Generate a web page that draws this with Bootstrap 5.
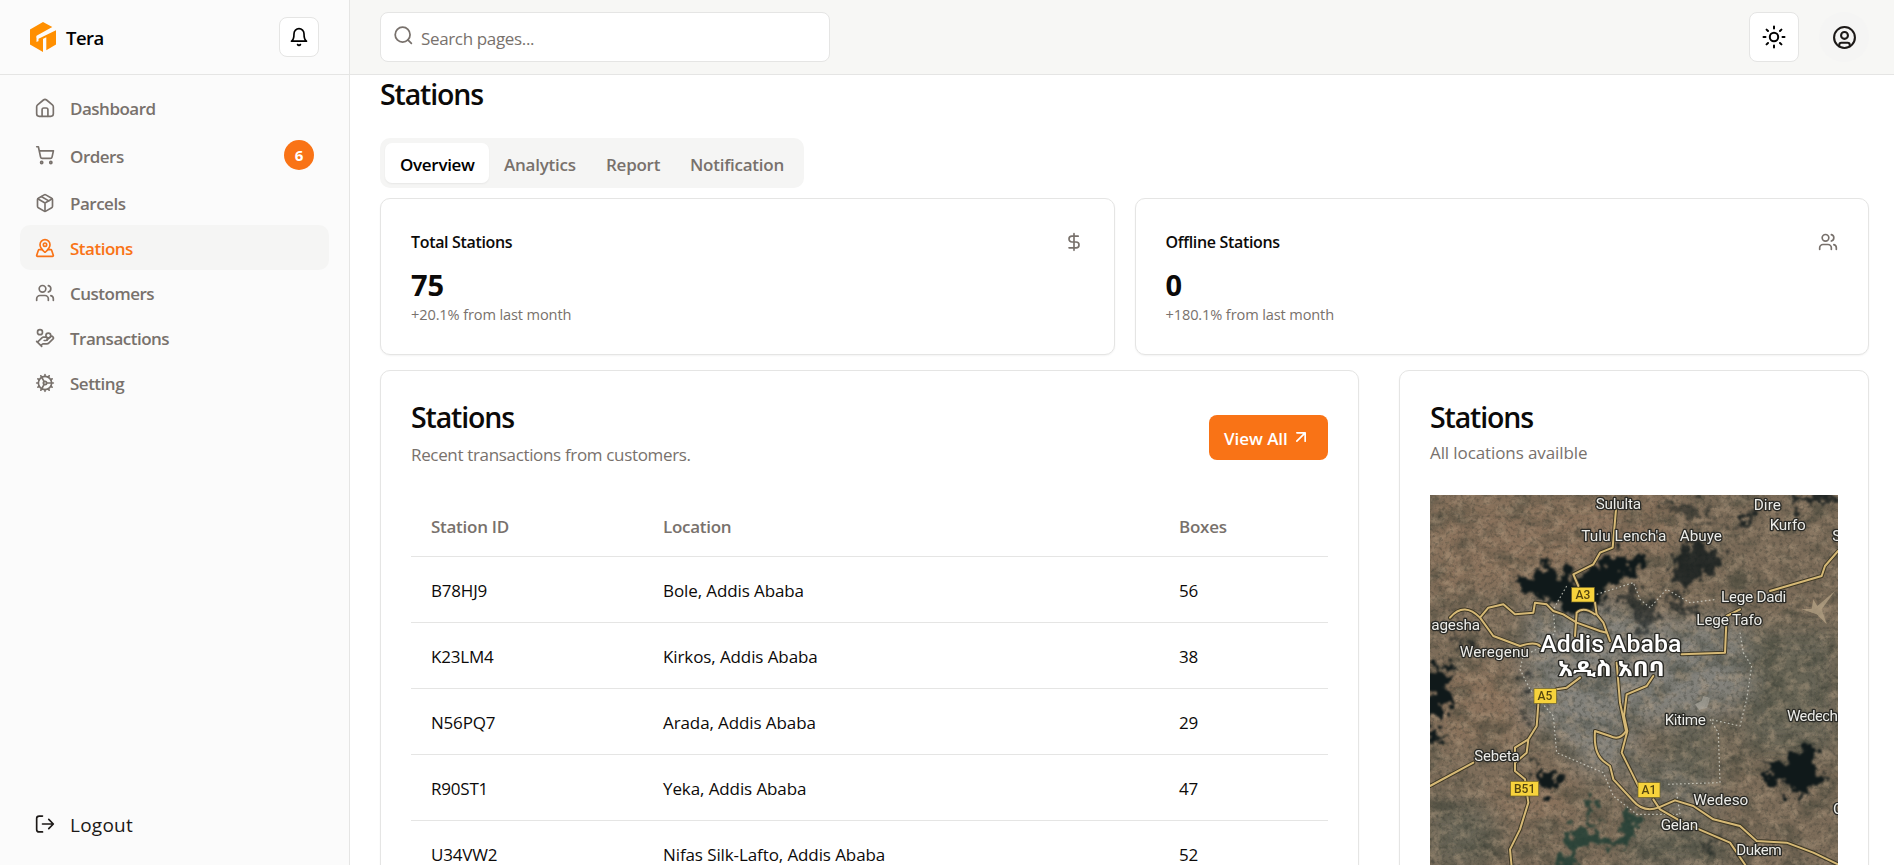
<!DOCTYPE html>
<html lang="en">
<head>
<meta charset="utf-8">
<meta name="viewport" content="width=device-width, initial-scale=1">
<title>Tera - Stations</title>
<link href="https://cdn.jsdelivr.net/npm/bootstrap@5.3.0/dist/css/bootstrap.min.css" rel="stylesheet">
<style>
:root{--line:#e5e5e4;--muted:#78716c;--ink:#0c0a09;--brand:#f97316;--soft:#f5f5f4}
body{font-family:"Open Sans","Noto Sans",sans-serif;font-size:17px;line-height:25px;color:var(--ink);height:865px;overflow:hidden;background:#fff}
svg.ic{width:20px;height:20px;fill:none;stroke:currentColor;stroke-width:2;stroke-linecap:round;stroke-linejoin:round;flex:none}
.muted{color:var(--muted)}
.side{width:350px;flex:none;background:#fbfbfb;border-right:1px solid var(--line)}
.bar{height:75px;border-bottom:1px solid var(--line);flex:none}
.side .bar{padding:0 30px}
.brandname{font-size:18.5px;font-weight:600;letter-spacing:-.5px;color:#000;margin-left:10px}
.sqbtn{background:#fff;border:1px solid var(--line);border-radius:8px;padding:0;display:flex;align-items:center;justify-content:center;color:#000}
.sqbtn.small-sq{width:40px;height:40px}
.sqbtn.big-sq{width:50px;height:50px}
.menu{padding:10px 20px 0}
.menu .nav-link{height:45px;padding:2px 15px 0;gap:15px;border-radius:10px;color:var(--muted);font-weight:600;letter-spacing:-.5px;display:flex;align-items:center}
.menu .nav-link .ic,.menu .nav-link .count{margin-bottom:2px}
.menu .nav-link.tall{height:50px}
.menu .nav-link.active{background:var(--soft);color:var(--brand)}
.count{width:30px;height:30px;background:var(--brand);color:#fff;font-size:15px;font-weight:700;letter-spacing:0}
.logout{height:50px;padding:2px 35px 0;gap:15px;margin-bottom:16px;font-size:19px;letter-spacing:.25px;color:#1c1917}
.logout .ic{margin-bottom:2px}
.main .bar{background:#f7f7f5;padding:0 25px 0 30px}
.search{width:450px;height:50px;background:#fff;border:1px solid var(--line);border-radius:8px;padding:0 12px;gap:7px;color:var(--muted);letter-spacing:-.35px}
.search .ic{width:21px;height:21px;margin-bottom:3px}
.avatar{width:50px;height:50px;background:#f5f5f4;color:#1c1917;border:0;margin-left:20px}
.content{padding:0 25px 0 30px}
.title{font-size:28.5px;font-weight:600;letter-spacing:-1.15px;line-height:38px;margin:0}
.tabs{background:var(--soft);border-radius:10px;padding:5px;height:50px;width:424px;margin-top:25px}
.tabs .nav-link{height:40px;padding:1px 0 0 15px;border-radius:7px;color:var(--muted);font-weight:600;letter-spacing:-.25px;line-height:41px;white-space:nowrap}
.tabs .nav-link.active{background:#fff;color:#000;box-shadow:0 1px 2px rgba(0,0,0,.06);letter-spacing:-.3px}
.panel{border:1px solid var(--line);border-radius:10px;background:#fff;box-shadow:0 1px 2px rgba(0,0,0,.05)}
.stats{gap:20px;margin-top:10px}
.stat{height:157px;padding:30px 30px 0;flex:1}
.stat .lbl{font-size:16px;font-weight:600;letter-spacing:-.33px;padding-top:1px}
.stat .num{font-size:29px;font-weight:700;line-height:40px;letter-spacing:0;margin-top:10px}
.stat .sub{font-size:14.6px;line-height:20px;letter-spacing:-.13px;color:var(--muted);margin-top:-1px}
.lowers{gap:40px;margin-top:15px}
.lower{height:620px;padding:27px 30px 0}
.lower .sub{letter-spacing:-.34px;color:var(--muted);margin-top:6px}
.place{width:470px;flex:none}
.place .sub{margin:4px 0 30px;letter-spacing:-.1px}
.head{height:98px}
.viewall{width:119px;height:45px;background:var(--brand);color:#fff;border:0;border-radius:8px;font-weight:600;letter-spacing:-.05px;padding:2px 15px 0;margin-top:17px}
.viewall .ic{margin:0 0 4px 3px}
.tbl{margin:0;table-layout:fixed;--bs-table-bg:transparent;color:var(--ink)}
.tbl th,.tbl td{padding:2px 20px 0;border-bottom:1px solid var(--line);height:66px;vertical-align:middle;letter-spacing:-.1px}
.tbl tbody td:first-child{letter-spacing:-.2px}
.tbl th{color:var(--muted);font-weight:600;height:60px;letter-spacing:-.27px}
.map{width:408px;height:371px;display:block}
.map text{font-family:Roboto,"Noto Sans Ethiopic","Noto Sans",sans-serif;font-size:46px;fill:#ecece8;stroke:#2a2a26;stroke-width:8px;paint-order:stroke;stroke-linejoin:round}
.map .big{font-size:70px;font-weight:500;fill:#fff}
.map .native{font-weight:700;font-size:64px}
.map .tag{font-size:36px;fill:#54450f;stroke:none;text-anchor:middle;font-weight:500}
</style>
</head>
<body>
<div class="d-flex h-100">
  <aside class="side d-flex flex-column">
    <div class="bar d-flex align-items-center justify-content-between">
      <div class="d-flex align-items-center">
        <svg width="26" height="30" viewBox="0 0 26 30"><path fill="#ff8f00" d="M13 0 22.3 5 6.500 13.700V20L13 16.800V30L0 22.500V7.500ZM26 8.200V22.500L16.300 28.200V15.300L10.500 18 8.500 19.400V16.800Z"/><path d="M6.800 15.800 22.500 7" stroke="#fbfbfb" stroke-width="2.200"/></svg>
        <span class="brandname">Tera</span>
      </div>
      <button class="sqbtn small-sq"><svg class="ic" viewBox="0 0 24 24"><path d="M6 8a6 6 0 0 1 12 0c0 7 3 9 3 9H3s3-2 3-9"/><path d="M10.3 21a1.94 1.94 0 0 0 3.4 0"/></svg></button>
    </div>
    <nav class="menu nav flex-column flex-nowrap">
      <a class="nav-link"><svg class="ic" viewBox="0 0 24 24"><path d="M2 10.5a3 3 0 0 1 1.100-2.300l7-5.800a3 3 0 0 1 3.800 0l7 5.800A3 3 0 0 1 22 10.500V19a3 3 0 0 1-3 3H5a3 3 0 0 1-3-3Z"/><path d="M8.500 22v-8a2 2 0 0 1 2-2h3a2 2 0 0 1 2 2v8"/></svg>Dashboard</a>
      <a class="nav-link tall"><svg class="ic" viewBox="0 0 24 24"><circle cx="8" cy="21" r="1.300"/><circle cx="19" cy="21" r="1.300"/><path d="M2.050 2.050h2l2.660 12.420a2 2 0 0 0 2 1.580h9.780a2 2 0 0 0 1.950-1.570l1.650-7.430H5.120"/></svg>Orders<span class="count rounded-circle ms-auto d-flex align-items-center justify-content-center">6</span></a>
      <a class="nav-link"><svg class="ic" viewBox="0 0 24 24"><path d="m7.500 4.270 9 5.150"/><path d="M21 8a2 2 0 0 0-1-1.730l-7-4a2 2 0 0 0-2 0l-7 4A2 2 0 0 0 3 8v8a2 2 0 0 0 1 1.730l7 4a2 2 0 0 0 2 0l7-4A2 2 0 0 0 21 16Z"/><path d="m3.300 7 8.700 5 8.700-5M12 22V12"/></svg>Parcels</a>
      <a class="nav-link active"><svg class="ic" viewBox="0 0 24 24"><path d="M18 8c0 3.600-3.900 7.400-5.400 8.800a1 1 0 0 1-1.200 0C9.900 15.400 6 11.600 6 8a6 6 0 0 1 12 0"/><circle cx="12" cy="8" r="2"/><path d="M8.700 14H5a1 1 0 0 0-.950.680l-2 6A1 1 0 0 0 3 22h18a1 1 0 0 0 .950-1.320l-2-6A1 1 0 0 0 19 14h-3.700"/></svg>Stations</a>
      <a class="nav-link"><svg class="ic" viewBox="0 0 24 24"><path d="M16 21v-2a4 4 0 0 0-4-4H6a4 4 0 0 0-4 4v2"/><circle cx="9" cy="7" r="4"/><path d="M22 21v-2a4 4 0 0 0-3-3.870M16 3.130a4 4 0 0 1 0 7.750"/></svg>Customers</a>
      <a class="nav-link"><svg class="ic" viewBox="0 0 24 24"><path d="M11 15h2a2 2 0 1 0 0-4h-3c-.6 0-1.100.2-1.400.6L3 17"/><path d="m7 21 1.600-1.400c.3-.4.8-.6 1.400-.6h4c1.100 0 2.100-.4 2.800-1.200l4.600-4.400a2 2 0 0 0-2.750-2.910l-4.200 3.900M2 16l6 6"/><circle cx="16" cy="9" r="2.900"/><circle cx="6" cy="5" r="3"/></svg>Transactions</a>
      <a class="nav-link"><svg class="ic" viewBox="0 0 24 24"><circle cx="12" cy="12" r="8"/><circle cx="12" cy="12" r="2"/><path d="M12 2v2M12 22v-2M17 20.660l-1-1.730M11 10.270 7 3.340M20.660 17l-1.730-1M3.340 7l1.730 1M14 12h8M2 12h2M20.660 7l-1.730 1M3.340 17l1.730-1M17 3.340l-1 1.730M11 13.730l-4 6.930"/></svg>Setting</a>
    </nav>
    <a class="logout mt-auto d-flex align-items-center text-decoration-none"><svg class="ic" viewBox="0 0 24 24"><path d="M9 2.500H5a3 3 0 0 0-3 3v13a3 3 0 0 0 3 3h4M9 12h12.500M16.500 6.500 22 12l-5.500 5.500"/></svg>Logout</a>
  </aside>

  <main class="main flex-grow-1">
    <header class="bar d-flex align-items-center">
      <div class="search d-flex align-items-center"><svg class="ic" viewBox="0 0 24 24"><circle cx="11" cy="11" r="8.500"/><path d="m21 21-4-4"/></svg><span style="padding-top:2px">Search pages...</span></div>
      <button class="sqbtn big-sq ms-auto"><svg class="ic" style="width:24px;height:24px" viewBox="0 0 24 24"><circle cx="12" cy="12" r="4.200"/><path d="M12 1.500v2M12 20.500v2M4.600 4.600 6 6M18 18l1.400 1.400M1.500 12h2M20.500 12h2M6 18l-1.400 1.400M19.400 4.600 18 6"/></svg></button>
      <button class="avatar rounded-circle p-0 d-flex align-items-center justify-content-center"><svg class="ic" style="width:25px;height:25px" viewBox="0 0 24 24"><circle cx="12" cy="12" r="10"/><circle cx="12" cy="10" r="3.300"/><path d="M7 20.600V19a2 2 0 0 1 2-2h6a2 2 0 0 1 2 2v1.600"/></svg></button>
    </header>

    <div class="content">
      <h1 class="title">Stations</h1>
      <div class="tabs nav flex-nowrap">
        <a class="nav-link active" style="width:104px">Overview</a>
        <a class="nav-link" style="width:102px">Analytics</a>
        <a class="nav-link" style="width:84px">Report</a>
        <a class="nav-link">Notification</a>
      </div>

      <div class="stats d-flex">
        <section class="panel stat">
          <div class="d-flex justify-content-between align-items-center"><span class="lbl">Total Stations</span><svg class="ic muted" viewBox="0 0 24 24"><path d="M12 2v20M17 5H9.500a3.500 3.500 0 0 0 0 7h5a3.500 3.500 0 0 1 0 7H6"/></svg></div>
          <div class="num">75</div>
          <div class="sub">+20.1% from last month</div>
        </section>
        <section class="panel stat">
          <div class="d-flex justify-content-between align-items-center"><span class="lbl">Offline Stations</span><svg class="ic muted" viewBox="0 0 24 24"><path d="M16 21v-2a4 4 0 0 0-4-4H6a4 4 0 0 0-4 4v2"/><circle cx="9" cy="7" r="4"/><path d="M22 21v-2a4 4 0 0 0-3-3.870M16 3.130a4 4 0 0 1 0 7.750"/></svg></div>
          <div class="num">0</div>
          <div class="sub">+180.1% from last month</div>
        </section>
      </div>

      <div class="lowers d-flex">
        <section class="panel lower flex-grow-1">
          <div class="head d-flex align-items-start justify-content-between">
            <div>
              <h2 class="title">Stations</h2>
              <div class="sub">Recent transactions from customers.</div>
            </div>
            <button class="viewall d-flex align-items-center text-nowrap">View All<svg class="ic" viewBox="0 0 24 24"><path d="M7 17 17 7M7 7h10v10"/></svg></button>
          </div>
          <table class="table tbl">
            <colgroup><col style="width:232px"><col style="width:516px"><col></colgroup>
            <thead><tr><th>Station ID</th><th>Location</th><th>Boxes</th></tr></thead>
            <tbody>
              <tr><td>B78HJ9</td><td>Bole, Addis Ababa</td><td>56</td></tr>
              <tr><td>K23LM4</td><td>Kirkos, Addis Ababa</td><td>38</td></tr>
              <tr><td>N56PQ7</td><td>Arada, Addis Ababa</td><td>29</td></tr>
              <tr><td>R90ST1</td><td>Yeka, Addis Ababa</td><td>47</td></tr>
              <tr><td>U34VW2</td><td>Nifas Silk-Lafto, Addis Ababa</td><td>52</td></tr>
            </tbody>
          </table>
        </section>

        <section class="panel lower place">
          <h2 class="title">Stations</h2>
          <div class="sub">All locations availble</div>
          <svg class="map" viewBox="30 27 1224 1113" preserveAspectRatio="none">
            <defs>
              <filter id="soft" x="-30%" y="-30%" width="160%" height="160%"><feGaussianBlur stdDeviation="36"/></filter>
              <filter id="ragged" x="-20%" y="-20%" width="140%" height="140%" color-interpolation-filters="sRGB"><feTurbulence type="fractalNoise" baseFrequency=".028" numOctaves="5" seed="4" result="n"/><feDisplacementMap in="SourceGraphic" in2="n" scale="130" xChannelSelector="R" yChannelSelector="G"/><feGaussianBlur stdDeviation="3"/></filter>
              <filter id="grainDark" x="0" y="0" width="100%" height="100%" color-interpolation-filters="sRGB"><feTurbulence type="fractalNoise" baseFrequency=".012 .016" numOctaves="6" seed="11"/><feColorMatrix values="0 0 0 0 .22  0 0 0 0 .24  0 0 0 0 .20  2.600 0 0 0 -1.150"/></filter>
              <filter id="grainLight" x="0" y="0" width="100%" height="100%" color-interpolation-filters="sRGB"><feTurbulence type="fractalNoise" baseFrequency=".03 .034" numOctaves="5" seed="29"/><feColorMatrix values="0 0 0 0 .74  0 0 0 0 .65  0 0 0 0 .54  0 3 0 0 -1.350"/></filter>
              <filter id="grainFine" x="0" y="0" width="100%" height="100%" color-interpolation-filters="sRGB"><feTurbulence type="fractalNoise" baseFrequency=".09" numOctaves="3" seed="7"/><feColorMatrix values="0 0 0 0 .2  0 0 0 0 .21  0 0 0 0 .18  0 0 3 0 -1.400"/></filter>
            </defs>
            <rect x="30" y="27" width="1224" height="1116" fill="#7c6c59"/>
            <g filter="url(#soft)">
              <path fill="#8a725b" d="M30 27H760V200L400 260 30 350ZM60 540 300 560 320 760 60 790ZM200 890 470 870 440 1000 180 1010Z"/>
              <path fill="#686557" d="M950 420H1254V800H960ZM740 720 900 720 900 900 740 880ZM30 940 250 960 200 1143H30ZM650 1000 860 1000 960 1143H600Z"/>
              <path fill="#83827b" d="M320 370 560 350 700 400 960 400 990 640 870 700 640 720 620 850 520 870 400 740 310 700Z"/>
              <path fill="#77746b" d="M640 780 760 850 900 930 850 990 640 930Z"/>
            </g>
            <rect x="30" y="27" width="1224" height="1116" filter="url(#grainDark)" opacity=".5"/>
            <rect x="30" y="27" width="1224" height="1116" filter="url(#grainLight)" opacity=".38"/>
            <rect x="30" y="27" width="1224" height="1116" filter="url(#grainFine)" opacity=".36"/>
            <g filter="url(#ragged)" fill="#10191a">
              <path d="M270 290 360 260 350 225 430 250 450 275 520 260 560 220 600 205 680 225 670 255 600 280 560 310 520 345 580 350 500 370 440 390 410 345 310 320Z"/>
              <path d="M770 190 790 160 860 180 900 215 860 265 780 300 750 260ZM930 110 1010 75 970 135ZM1100 27H1254V55H1130Z" opacity=".8"/>
              <path d="M10 535 110 545 75 610 90 650 65 700 10 710ZM10 730 75 760 10 780Z"/>
              <path d="M335 815 370 840 430 875 400 920 360 905ZM1030 840 1060 850 1110 800 1180 775 1180 830 1215 865 1180 900 1160 955 1110 900 1040 885Z"/>
              <path d="M610 350 640 300 690 350 720 400 690 440 640 410ZM720 310 790 340 850 390 760 370ZM95 440 150 450 130 490ZM300 560 330 590 290 610ZM310 680 340 700 310 730Z" opacity=".6"/>
              <path fill="#203d34" d="M490 930 540 960 525 1030 590 1060 640 970 670 1000 610 1080 540 1075 470 1105 460 1160 420 1130 440 1040 520 1020Z" opacity=".85"/>
              <path d="M700 55 840 50 880 80 800 90ZM780 130 900 110 890 130ZM840 1065 890 1070 860 1100ZM800 990 840 975 830 1005Z" opacity=".5"/>
            </g>
            <g fill="none" stroke="#d9d9cf" stroke-width="3.500" stroke-dasharray="5 7" opacity=".75" stroke-linejoin="round">
              <path d="M530 325 640 290 660 340 690 365 740 310 810 350 890 340M440 300 400 370 405 440 370 480 310 510 300 550 330 610 400 690 410 800 480 830 550 860 580 930 650 985 780 985 770 920M960 440 970 500 995 540 980 640 960 720 870 700 895 740 900 890 740 895"/>
            </g>
            <g fill="none" stroke-linejoin="round" stroke-linecap="round">
              <g stroke="#3e3725" stroke-width="12"><use href="#roadset"/></g>
              <g stroke="#d6b976" stroke-width="6"><path id="roadset" d="M588 70 578 185 540 200 520 235 460 265 475 300M525 350 530 385 550 410 570 465M90 395C120 360 150 365 180 395L205 365 250 355 285 385 340 380 345 350 380 355 400 375 430 385 470 410 540 435 560 440M180 395 220 450 300 480Q345 465 360 480M525 385Q490 360 470 380L465 450M785 505 915 500 920 390 960 370M1050 315 1205 270 1215 240 1254 195M410 610 440 605 480 575M355 655 350 720 325 760 285 785 285 855 315 880 325 950 300 1030 270 1090 275 1143M325 760 320 800 285 830M30 900 160 830M590 530 600 650 618 735Q600 765 570 750L525 735Q520 800 550 825L570 840 580 880 640 945Q670 980 715 965L765 943 820 960 880 1000 960 1020 1010 1065 1100 1070 1180 1100 1254 1135M700 570 680 600 620 625 612 690 622 735 605 800 635 860 655 900M700 940 720 970 790 1010 860 1040 930 1070 980 1143"/></g>
            </g>
            <path d="M1145 370 1175 368 1180 340 1192 360 1245 315 1205 370 1220 415 1190 385Z" fill="#b6a386" opacity=".75"/>
            <path d="M825 655 845 645 850 630 870 635 862 665 838 672Z" fill="#b0aea4" opacity=".6"/>
            <g fill="#f7d33c" stroke="#746526" stroke-width="2"><rect x="455" y="304" width="68" height="44"/><rect x="342" y="608" width="67" height="44"/><rect x="272" y="886" width="84" height="44"/><rect x="654" y="890" width="66" height="44"/></g>
            <text class="tag" x="489" y="339">A3</text><text class="tag" x="375" y="643">A5</text><text class="tag" x="314" y="921">B51</text><text class="tag" x="687" y="925">A1</text>
            <text x="527" y="68" textLength="136">Sululta</text><text x="1001" y="71" textLength="82">Dire</text><text x="1049" y="132" textLength="108">Kurfo</text>
            <text x="484" y="165" textLength="255">Tulu Lench'a</text><text x="779" y="165" textLength="127">Abuye</text><text x="1237" y="165">S</text>
            <text x="903" y="348" textLength="196">Lege Dadi</text><text x="829" y="417" textLength="198">Lege Tafo</text><text x="34" y="431" textLength="146">agesha</text>
            <text x="119" y="514" textLength="208">Weregenu</text><text x="734" y="718" textLength="124">Kitime</text><text x="1101" y="705" textLength="153">Wedech</text><text x="163" y="825" textLength="136">Sebeta</text>
            <text x="820" y="957" textLength="165">Wedeso</text><text x="722" y="1032" textLength="113">Gelan</text><text x="949" y="1107" textLength="136">Dukem</text><text x="1239" y="983">C</text>
            <text class="big" x="361" y="498" textLength="423" lengthAdjust="spacingAndGlyphs">Addis Ababa</text><text class="big native" x="414" y="571" textLength="320" lengthAdjust="spacingAndGlyphs">አዲስ አበባ</text>
          </svg>
        </section>
      </div>
    </div>
  </main>
</div>
<script src="https://cdn.jsdelivr.net/npm/bootstrap@5.3.0/dist/js/bootstrap.bundle.min.js"></script>
</body>
</html>
